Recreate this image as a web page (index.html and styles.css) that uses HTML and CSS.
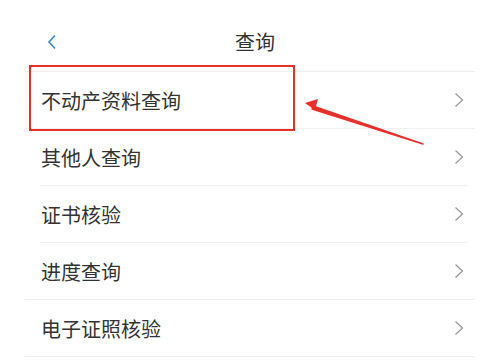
FILE: index.html
```html
<!DOCTYPE html>
<html lang="zh-CN">
<head>
    <meta charset="UTF-8">
    <meta name="viewport" content="width=device-width, initial-scale=1.0">
    <title>查询</title>
    <link rel="stylesheet" href="styles.css">
</head>
<body>
    <div class="page">
        <!-- 顶部导航 -->
        <div class="header">
            <span class="back">
                <svg width="10" height="16" viewBox="0 0 10 16"><path d="M8 1.5 L2 8 L8 14.5" fill="none" stroke="#3a86c8" stroke-width="1.6"/></svg>
            </span>
            <span class="title">查询</span>
        </div>

        <!-- 列表 -->
        <ul class="menu">
            <li class="menu-item"><span>不动产资料查询</span><svg class="arrow" viewBox="0 0 10 16"><path d="M1.5 1.5 L8.5 8 L1.5 14.5"/></svg></li>
            <li class="menu-item inset"><span>其他人查询</span><svg class="arrow" viewBox="0 0 10 16"><path d="M1.5 1.5 L8.5 8 L1.5 14.5"/></svg></li>
            <li class="menu-item inset"><span>证书核验</span><svg class="arrow" viewBox="0 0 10 16"><path d="M1.5 1.5 L8.5 8 L1.5 14.5"/></svg></li>
            <li class="menu-item"><span>进度查询</span><svg class="arrow" viewBox="0 0 10 16"><path d="M1.5 1.5 L8.5 8 L1.5 14.5"/></svg></li>
            <li class="menu-item"><span>电子证照核验</span><svg class="arrow" viewBox="0 0 10 16"><path d="M1.5 1.5 L8.5 8 L1.5 14.5"/></svg></li>
        </ul>

        <!-- 标注 -->
        <div class="mark-box"></div>
        <svg class="mark-arrow" width="483" height="363" viewBox="0 0 483 363">
            <path d="M423 144 L313 106 L312 109 Z" stroke="#e8302a" stroke-width="1.4" fill="#e8302a" stroke-linejoin="round"/>
            <path d="M305 103 L318 99 L315 110 Z" fill="#e8302a"/>
        </svg>
    </div>
</body>
</html>
```

FILE: styles.css
```css
body {
    margin: 0;
    background: #ffffff;
    font-family: "Noto Sans CJK SC", "Noto Sans", sans-serif;
    color: #333333;
}

.page {
    position: relative;
    width: 483px;
    height: 363px;
    overflow: hidden;
}

.header {
    display: flex;
    align-items: center;
    justify-content: center;
    height: 72px;
    padding-top: 12px;
    box-sizing: border-box;
    position: relative;
    border-bottom: 1px solid #eeeeee;
    margin: 0 8px 0 25px;
}

.back {
    position: absolute;
    left: 22px;
    top: 34px;
    line-height: 0;
}

.title {
    font-size: 20px;
    color: #333333;
    margin-left: 10px;
}

.menu {
    list-style: none;
    margin: 0;
    padding: 0;
}

.menu-item {
    display: flex;
    align-items: center;
    justify-content: space-between;
    height: 56px;
    margin: 0 8px 0 25px;
    padding: 0 11px 0 16px;
    border-bottom: 1px solid #f0f0f0;
    font-size: 20px;
}

.menu-item.inset {
    margin-left: 40px;
    padding-left: 1px;
    margin-right: 15px;
    padding-right: 4px;
}

.arrow {
    width: 10px;
    height: 16px;
    fill: none;
    stroke: #9a9a9a;
    stroke-width: 1.3;
}

.mark-box {
    position: absolute;
    left: 29px;
    top: 65px;
    width: 262px;
    height: 62px;
    border: 2px solid #e8302a;
}

.mark-arrow {
    position: absolute;
    left: 0;
    top: 0;
}
```
